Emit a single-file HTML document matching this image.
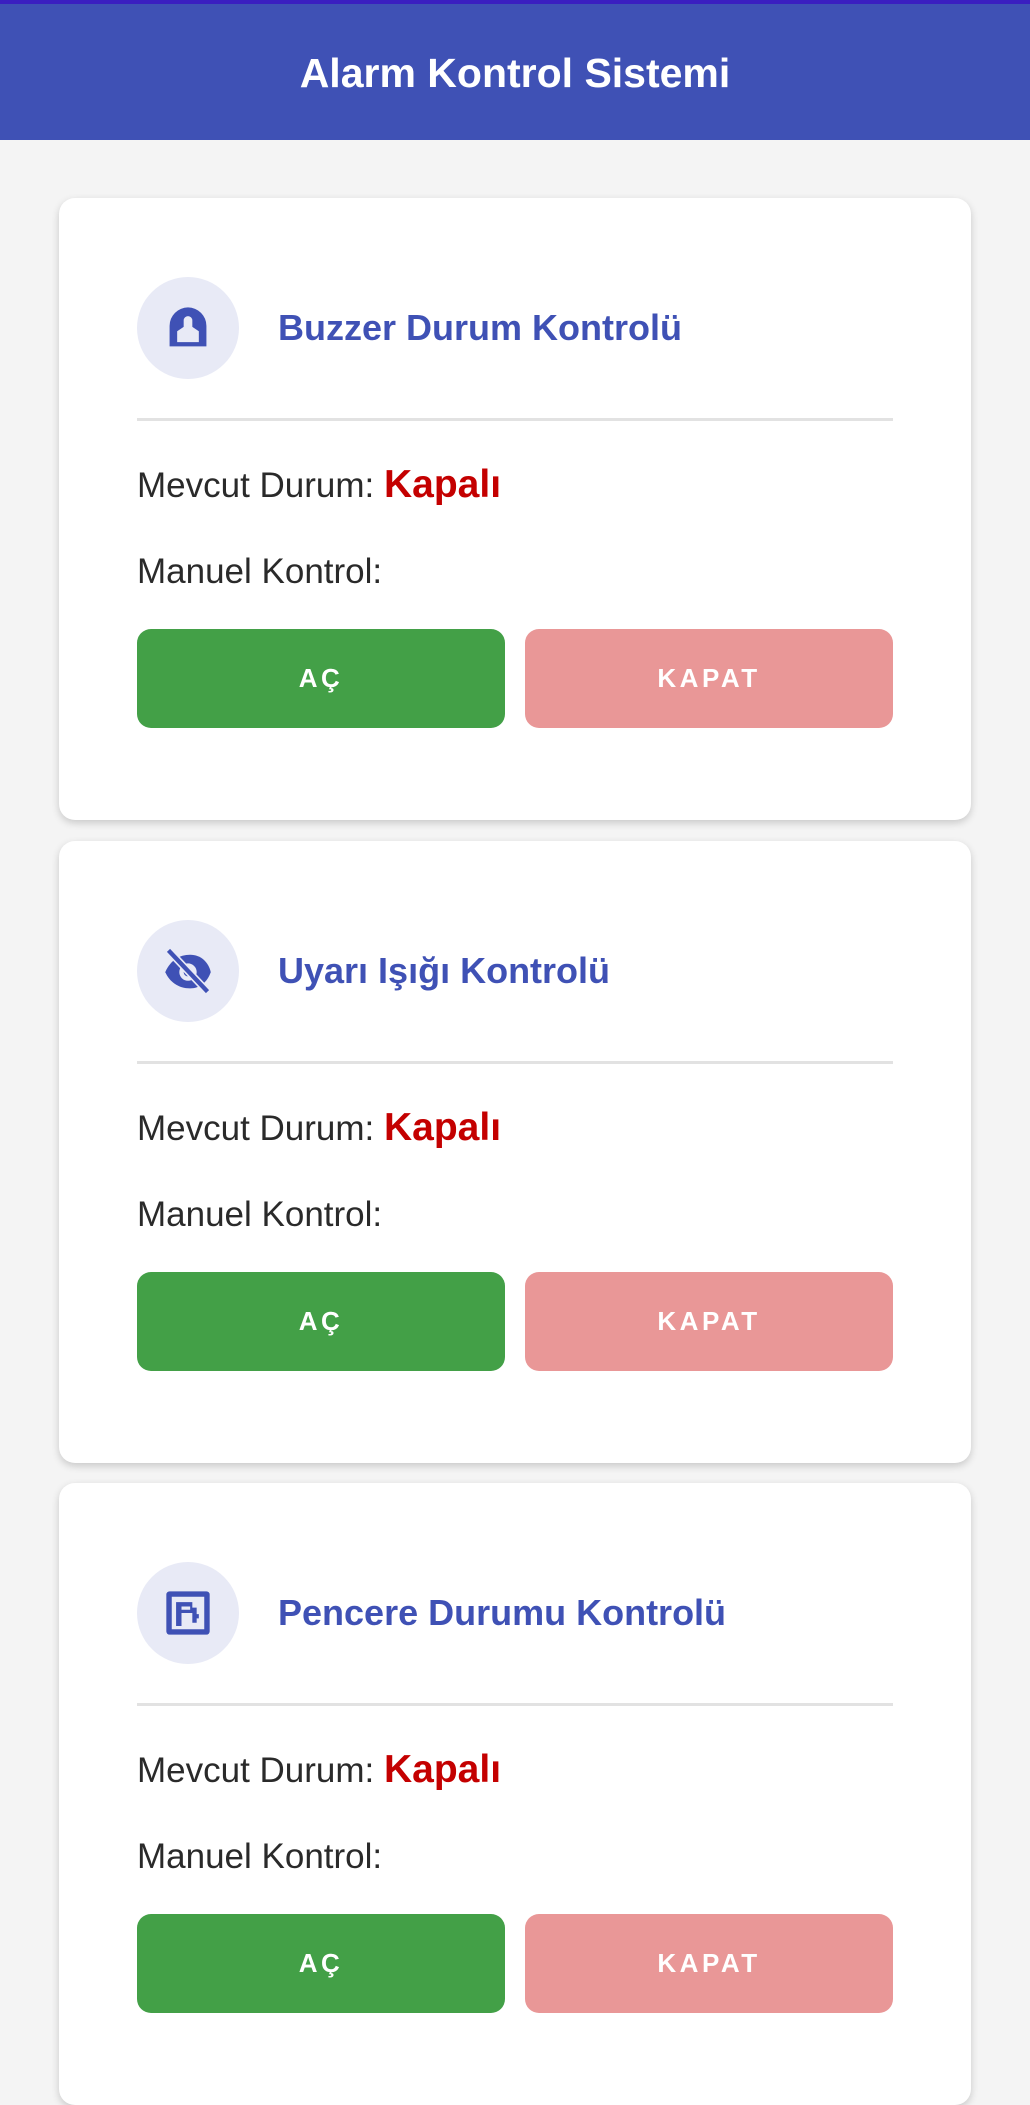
<!DOCTYPE html>
<html><head><meta charset="utf-8"><style>
*{margin:0;padding:0;box-sizing:border-box}
body{width:1030px;height:2048px;overflow:hidden;background:#f4f4f4;font-family:"Liberation Sans",sans-serif;position:relative}
.top{position:absolute;left:0;top:0;width:1030px;height:4px;background:#3a1fc0}
.hdr{position:absolute;left:0;top:4px;width:1030px;height:136px;background:#3f51b5;color:#fff;font-weight:bold;font-size:41px;text-align:center;line-height:138px}
.card{position:absolute;left:59px;width:912px;height:622px;background:#fff;border-radius:16px;box-shadow:0 3px 8px rgba(0,0,0,.18)}
.ic{position:absolute;left:78px;top:79px;width:102px;height:102px;border-radius:50%;background:#e8eaf6}
.ic svg{position:absolute;left:25px;top:25px}
.tt{position:absolute;left:219px;top:108px;font-size:36px;font-weight:bold;color:#3f51b5;line-height:44px}
.dv{position:absolute;left:78px;top:220px;width:756px;height:3px;background:#e2e2e2}
.st{position:absolute;left:78px;top:265px;font-size:35px;color:#2a2a2a;line-height:44px}
.st b{color:#c40000;font-size:39px}
.mk{position:absolute;left:78px;top:352px;font-size:35px;color:#2a2a2a;line-height:44px}
.b{position:absolute;top:431px;width:368px;height:99px;border-radius:14px;color:#fff;font-weight:bold;font-size:26px;letter-spacing:3.5px;text-align:center;line-height:99px}
.g{left:78px;background:#43a047}.r{left:466px;background:#e99797}
</style></head><body>
<div class="top"></div>
<div class="hdr">Alarm Kontrol Sistemi</div>

<div class="card" style="top:198px">
<div class="ic"><svg width="52" height="52" viewBox="0 0 48 48"><path d="M7 41V22A17 17 0 0 1 41 22V41Z" fill="#3f51b5"/><path d="M14 37V27L20 23V17A4 4 0 0 1 28 17V23L34 27V37Z" fill="#e8eaf6"/></svg></div>
<div class="tt">Buzzer Durum Kontrolü</div>
<div class="dv"></div>
<div class="st">Mevcut Durum: <b>Kapalı</b></div>
<div class="mk">Manuel Kontrol:</div>
<div class="b g">AÇ</div><div class="b r">KAPAT</div>
</div>

<div class="card" style="top:841px">
<div class="ic"><svg width="52" height="52" viewBox="0 0 48 48"><path d="M3 25C8 14 16 9 26 9C36 9 43 16 45 25C42 34 35 40 26 40C15 40 7 34 3 25Z" fill="#3f51b5"/><circle cx="24" cy="25" r="8" fill="#e8eaf6"/><circle cx="24" cy="25" r="4" fill="#3f51b5"/><path d="M6 5L42 43" stroke="#e8eaf6" stroke-width="7"/><path d="M6 5L42 43" stroke="#3f51b5" stroke-width="4"/></svg></div>
<div class="tt">Uyarı Işığı Kontrolü</div>
<div class="dv"></div>
<div class="st">Mevcut Durum: <b>Kapalı</b></div>
<div class="mk">Manuel Kontrol:</div>
<div class="b g">AÇ</div><div class="b r">KAPAT</div>
</div>

<div class="card" style="top:1483px">
<div class="ic"><svg width="52" height="52" viewBox="0 0 48 48"><rect x="4" y="4" width="40" height="40" rx="3" fill="#3f51b5"/><rect x="9" y="9" width="30" height="30" fill="#e8eaf6"/><path d="M13 14H28V19H32V25H34V29H32V33H28V24H18V36H13Z" fill="#3f51b5"/><path d="M18 18H26V21H18Z" fill="#e8eaf6"/></svg></div>
<div class="tt">Pencere Durumu Kontrolü</div>
<div class="dv"></div>
<div class="st">Mevcut Durum: <b>Kapalı</b></div>
<div class="mk">Manuel Kontrol:</div>
<div class="b g">AÇ</div><div class="b r">KAPAT</div>
</div>
</body></html>
